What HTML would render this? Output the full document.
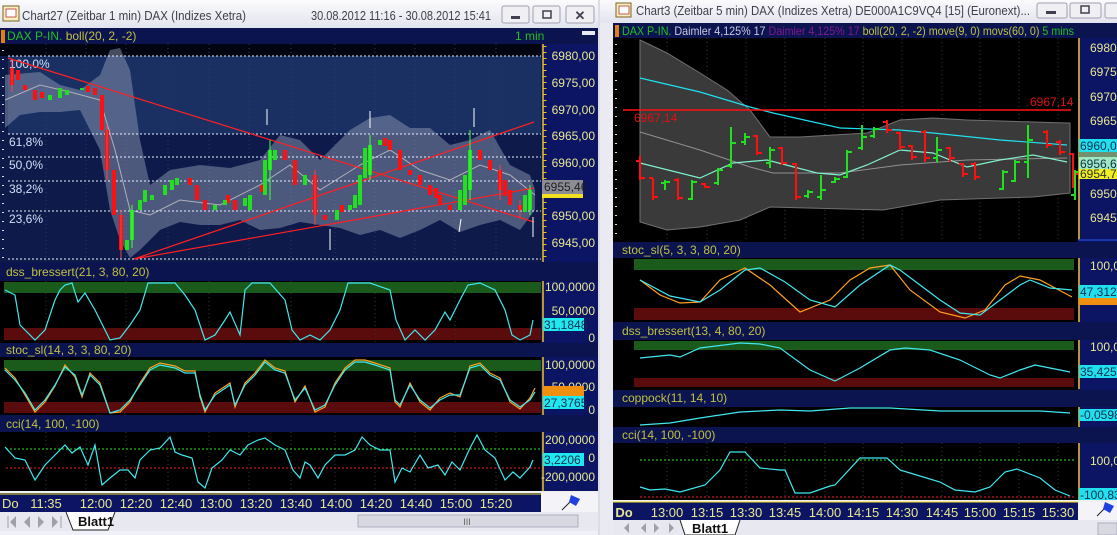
<!DOCTYPE html>
<html><head><meta charset="utf-8"><style>
html,body{margin:0;padding:0;background:#dcdce6;}
svg{display:block;font-family:"Liberation Sans",sans-serif;}
</style></head><body>
<svg width="1117" height="535" viewBox="0 0 1117 535" xmlns="http://www.w3.org/2000/svg">
<defs>
<linearGradient id="tb" x1="0" y1="0" x2="0" y2="1"><stop offset="0" stop-color="#fbfbfd"/><stop offset="1" stop-color="#e2e4ee"/></linearGradient>
</defs>
<rect width="1117" height="535" fill="#dcdce6"/>

<!-- ========== LEFT WINDOW ========== -->
<rect x="0" y="0" width="598" height="28" fill="url(#tb)"/>
<rect x="3" y="6" width="16" height="15" fill="#f4f0c0" stroke="#806020"/><rect x="6" y="9" width="10" height="8" fill="#fff" stroke="#c03030" stroke-width="0.8"/>
<text x="22" y="20" font-size="13" fill="#404048" textLength="224" lengthAdjust="spacingAndGlyphs">Chart27 (Zeitbar 1 min)  DAX (Indizes Xetra)</text>
<text x="311" y="20" font-size="13" fill="#404048" textLength="180" lengthAdjust="spacingAndGlyphs">30.08.2012 11:16 - 30.08.2012 15:41</text>
<g fill="#f0f0f4" stroke="#a0a0b0"><rect x="502" y="6" width="27" height="17" rx="2"/><rect x="533" y="6" width="27" height="17" rx="2"/><rect x="566" y="6" width="28" height="17" rx="2"/></g>
<rect x="511" y="16" width="9" height="3" fill="#404050"/><rect x="543" y="11" width="8" height="7" fill="none" stroke="#404050" stroke-width="1.5"/>
<text x="580" y="20" font-size="13" font-weight="bold" text-anchor="middle" fill="#404050">✕</text>

<!-- header -->
<rect x="0" y="28" width="598" height="16" fill="#0c1450"/>
<rect x="1" y="30" width="4" height="13" fill="#e08010"/>
<text x="7" y="40" font-size="12"><tspan fill="#20c020">DAX P-IN. </tspan><tspan fill="#c0c040">boll(20, 2, -2)</tspan></text>
<text x="515" y="40" font-size="12" fill="#20c020">1 min</text>
<rect x="582" y="31" width="13" height="4" fill="#e8e8f0"/>

<!-- main plot -->
<rect x="0" y="44" width="541" height="218" fill="#0e1a4a"/>
<rect x="0" y="44" width="541" height="12" fill="#020410"/>
<rect x="8" y="56" width="533" height="78" fill="#1a3062"/>
<g stroke="#2a3a6a" stroke-dasharray="1,3"><line x1="46" y1="44" x2="46" y2="262"/><line x1="86" y1="44" x2="86" y2="262"/><line x1="126" y1="44" x2="126" y2="262"/><line x1="168" y1="44" x2="168" y2="262"/><line x1="209" y1="44" x2="209" y2="262"/><line x1="249" y1="44" x2="249" y2="262"/><line x1="291" y1="44" x2="291" y2="262"/><line x1="335" y1="44" x2="335" y2="262"/><line x1="375" y1="44" x2="375" y2="262"/><line x1="415" y1="44" x2="415" y2="262"/><line x1="455" y1="44" x2="455" y2="262"/><line x1="496" y1="44" x2="496" y2="262"/></g>
<polygon fill="#8c96b0" fill-opacity="0.5" points="5,75 40,72 60,85 80,90 100,75 110,50 120,48 130,70 140,140 150,185 170,170 200,165 230,168 260,160 280,135 300,140 320,160 350,130 370,118 390,115 410,128 430,128 450,145 470,140 490,130 510,165 530,175 535,190 535,210 520,230 500,220 480,225 460,232 440,220 420,230 400,238 380,230 360,235 340,228 320,225 300,222 280,228 260,230 240,220 220,225 200,225 180,222 160,230 140,250 130,258 120,240 110,210 100,150 80,110 60,112 40,112 20,115 5,128"/>
<polyline fill="none" stroke="#b0b0b8" stroke-width="1" points="5,100 40,85 70,92 100,100 115,150 130,210 150,215 180,200 220,205 260,185 290,165 320,190 360,165 390,150 420,170 450,180 480,165 510,175 535,195"/>
<g stroke="#e8f0ff" stroke-dasharray="2,2" stroke-width="1"><line x1="8" y1="56" x2="541" y2="56"/><line x1="8" y1="134" x2="541" y2="134"/><line x1="8" y1="157" x2="541" y2="157"/><line x1="8" y1="181" x2="541" y2="181"/><line x1="8" y1="211" x2="541" y2="211"/><line x1="8" y1="259" x2="541" y2="259"/></g>
<g font-size="12" fill="#d0e0f8"><text x="9" y="68">100,0%</text><text x="9" y="146">61,8%</text><text x="9" y="169">50,0%</text><text x="9" y="193">38,2%</text><text x="9" y="223">23,6%</text></g>
<g stroke="#ff2020" stroke-width="1.2"><line x1="8" y1="58" x2="534" y2="222"/><line x1="134" y1="259" x2="534" y2="188"/><line x1="134" y1="259" x2="534" y2="122"/></g>
<g stroke="#ffffff" stroke-width="1"><line x1="267" y1="109" x2="267" y2="125"/><line x1="370" y1="111" x2="370" y2="128"/><line x1="474" y1="108" x2="474" y2="127"/><line x1="330" y1="229" x2="330" y2="250"/><line x1="461" y1="219" x2="459" y2="232"/><line x1="533" y1="217" x2="533" y2="237"/></g>
<path stroke="#ff1010" stroke-width="4" fill="none" d="M12 68V85M25 85V90M35 90V100M95 88V95M102 95V130M107 130V170M114 170V215M121 215V250M190 178V185M197 185V200M205 200V210M235 200V210M285 150V160M295 160V185M315 175V215M325 215V220M390 140V150M400 150V170M410 170V175M420 175V185M430 185V195M440 195V205M450 205V210M480 150V160M490 160V170M500 170V190M510 190V205M520 205V210M18 70V80M42 92V98M88 86V92M228 195V203M262 185V192M342 205V212M385 138V146M436 188V198M505 180V196"/>
<path stroke="#20e020" stroke-width="4" fill="none" d="M50 95V100M67 90V95M82 88V90M127 240V250M132 210V240M140 200V210M152 195V200M165 185V195M177 178V185M215 205V210M225 200V205M250 195V210M265 160V195M275 150V160M305 175V185M337 210V220M350 205V210M360 175V205M370 145V175M380 140V145M460 190V210M470 150V190M530 190V210M60 88V98M145 190V202M172 180V190M245 198V206M270 150V170M355 195V208M365 148V178M465 175V205M525 195V212"/>
<path stroke="#ff4040" stroke-width="1" fill="none" d="M12 60V92M107 125V180M121 210V258M315 170V225M500 165V200M520 200V218"/>
<path stroke="#40ff40" stroke-width="1" fill="none" d="M132 205V248M270 140V200M370 135V180M470 130V200M530 185V215"/>
<line x1="3" y1="50" x2="3" y2="262" stroke="#ddd" stroke-width="2" stroke-dasharray="1,8"/>
<!-- main axis -->
<rect x="541" y="44" width="57" height="218" fill="#0c1464"/>
<line x1="543" y1="44" x2="543" y2="262" stroke="#f0c020" stroke-width="1.5"/>
<line x1="545" y1="46" x2="545" y2="260" stroke="#f0c020" stroke-width="3" stroke-dasharray="1,5"/>
<g font-size="12" fill="#e8e890" text-anchor="end"><text x="595" y="60">6980,00</text><text x="595" y="87">6975,00</text><text x="595" y="114">6970,00</text><text x="595" y="140">6965,00</text><text x="595" y="167">6960,00</text><text x="595" y="220">6950,00</text><text x="595" y="247">6945,00</text></g>
<rect x="542" y="193" width="41" height="5" fill="#f0e020"/>
<rect x="542" y="180" width="41" height="14" fill="#8c8c94"/>
<text x="544" y="191" font-size="12" fill="#202020">6955,46</text>

<!-- dss panel -->
<rect x="0" y="262" width="598" height="19" fill="#0c1450"/>
<text x="6" y="276" font-size="12" fill="#c0c040">dss_bressert(21, 3, 80, 20)</text>
<rect x="0" y="281" width="541" height="62" fill="#000"/>
<rect x="4" y="282" width="537" height="11" fill="#1a5a1a"/>
<rect x="4" y="328" width="537" height="12" fill="#5a0c0c"/>
<g stroke="#333" stroke-dasharray="1,3"><line x1="46" y1="281" x2="46" y2="343"/><line x1="126" y1="281" x2="126" y2="343"/><line x1="209" y1="281" x2="209" y2="343"/><line x1="291" y1="281" x2="291" y2="343"/><line x1="375" y1="281" x2="375" y2="343"/><line x1="455" y1="281" x2="455" y2="343"/></g>
<polyline fill="none" stroke="#40e8f0" stroke-width="1.2" points="5,290 15,295 20,325 35,340 45,330 55,300 60,290 65,285 72,283 78,302 85,293 95,310 105,330 110,340 120,338 130,325 140,310 148,283 160,283 175,283 185,295 195,310 205,340 215,335 225,320 230,312 240,335 245,290 252,283 270,283 285,300 292,330 300,340 310,335 320,340 330,330 340,310 348,283 370,283 390,290 396,320 405,340 415,330 425,340 435,330 445,312 450,320 460,300 468,285 480,283 495,290 505,310 512,335 520,340 530,335 533,320"/>
<rect x="541" y="281" width="57" height="62" fill="#0c1464"/>
<line x1="543" y1="281" x2="543" y2="342" stroke="#f0c020" stroke-width="1.5"/>
<g font-size="12" fill="#e8e890" text-anchor="end"><text x="595" y="291">100,0000</text><text x="595" y="315">50,0000</text><text x="595" y="342">0</text></g>
<rect x="543" y="318" width="41" height="13" fill="#20e8f0"/><text x="544" y="329" font-size="12" fill="#103050">31,1848</text>

<!-- stoc panel -->
<rect x="0" y="343" width="598" height="14" fill="#0c1450"/>
<text x="6" y="354" font-size="12" fill="#c0c040">stoc_sl(14, 3, 3, 80, 20)</text>
<rect x="0" y="357" width="541" height="58" fill="#000"/>
<rect x="4" y="360" width="537" height="11" fill="#1a5a1a"/>
<rect x="4" y="402" width="537" height="11" fill="#5a0c0c"/>
<polyline fill="none" stroke="#ffa020" stroke-width="1.2" points="5,368 15,378 25,395 35,412 45,402 55,386 65,365 75,377 82,397 90,373 100,383 110,413 120,412 130,402 140,383 150,368 160,363 175,366 185,371 195,371 200,397 205,412 215,393 230,383 235,407 245,383 255,373 265,360 275,368 285,371 295,402 305,386 315,412 325,407 335,383 345,368 355,360 365,360 375,363 390,368 395,402 400,407 410,383 420,402 430,410 440,398 450,393 460,397 470,366 480,363 490,373 500,378 510,402 520,409 530,398 535,388"/>
<polyline fill="none" stroke="#40e8f0" stroke-width="1.2" points="5,370 15,380 25,393 35,410 45,400 55,385 65,367 75,375 82,395 90,375 100,385 110,413 120,410 130,400 140,385 150,370 160,365 175,368 185,373 195,373 200,395 205,410 215,395 230,385 235,405 245,385 255,375 265,362 275,370 285,373 295,400 305,388 315,410 325,405 335,385 345,370 355,362 365,362 375,365 390,370 395,400 400,405 410,385 420,400 430,408 440,400 450,395 460,395 470,368 480,365 490,375 500,380 510,400 520,407 530,400 535,392"/>
<rect x="541" y="357" width="57" height="58" fill="#0c1464"/>
<line x1="543" y1="357" x2="543" y2="415" stroke="#f0c020" stroke-width="1.5"/>
<g font-size="12" fill="#e8e890" text-anchor="end"><text x="595" y="369">100,0000</text><text x="595" y="391">50,0000</text><text x="595" y="414">0</text></g>
<rect x="543" y="386" width="41" height="10" fill="#f09010"/>
<rect x="543" y="396" width="41" height="13" fill="#20e8f0"/><text x="544" y="407" font-size="12" fill="#103050">27,3765</text>

<!-- cci panel -->
<rect x="0" y="415" width="598" height="17" fill="#0c1450"/>
<text x="6" y="428" font-size="12" fill="#c0c040">cci(14, 100, -100)</text>
<rect x="0" y="432" width="541" height="60" fill="#000"/>
<g stroke="#333" stroke-dasharray="1,3"><line x1="46" y1="432" x2="46" y2="492"/><line x1="86" y1="432" x2="86" y2="492"/><line x1="126" y1="432" x2="126" y2="492"/><line x1="168" y1="432" x2="168" y2="492"/><line x1="209" y1="432" x2="209" y2="492"/><line x1="249" y1="432" x2="249" y2="492"/><line x1="291" y1="432" x2="291" y2="492"/><line x1="335" y1="432" x2="335" y2="492"/><line x1="375" y1="432" x2="375" y2="492"/><line x1="415" y1="432" x2="415" y2="492"/><line x1="455" y1="432" x2="455" y2="492"/><line x1="496" y1="432" x2="496" y2="492"/></g>
<line x1="6" y1="449" x2="541" y2="449" stroke="#30e030" stroke-dasharray="2,2"/>
<line x1="6" y1="468" x2="541" y2="468" stroke="#ff2020" stroke-dasharray="2,2"/>
<polyline fill="none" stroke="#40e8f0" stroke-width="1.2" points="5,447 15,458 25,460 35,480 45,465 55,455 65,445 72,453 80,447 88,465 95,445 102,485 110,478 120,470 128,470 135,478 140,460 150,450 160,448 170,437 175,452 182,455 192,458 198,482 205,488 212,468 222,460 230,450 240,455 248,445 258,440 265,438 275,445 285,450 293,470 300,478 305,462 310,465 318,478 325,465 335,455 345,455 355,450 362,437 370,445 380,450 390,450 395,482 402,468 410,472 420,455 428,468 438,465 445,475 452,462 460,470 470,448 477,435 485,450 495,458 505,480 513,472 520,478 530,467 533,460"/>
<rect x="541" y="432" width="57" height="60" fill="#0c1464"/>
<line x1="543" y1="432" x2="543" y2="491" stroke="#f0c020" stroke-width="1.5"/>
<g font-size="12" fill="#e8e890" text-anchor="end"><text x="595" y="444">200,0000</text><text x="595" y="462">0</text><text x="595" y="481">-200,0000</text></g>
<rect x="543" y="453" width="41" height="13" fill="#20e8f0"/><text x="544" y="464" font-size="12" fill="#103050">3,2206</text>

<!-- time axis left -->
<rect x="0" y="491" width="598" height="2" fill="#f0f0f0"/>
<rect x="0" y="493" width="541" height="19" fill="#0c1464"/>
<line x1="0" y1="494" x2="541" y2="494" stroke="#f0e020"/>
<rect x="541" y="493" width="57" height="19" fill="#f4f4f8"/>
<path d="M562 510L572 500" stroke="#202020"/><path d="M571 495L580 499L576 506L569 502Z" fill="#2040e0"/>
<g font-size="13" fill="#e8e890"><text x="2" y="508">Do</text><text x="46" y="508" text-anchor="middle">11:35</text><text x="96" y="508" text-anchor="middle">12:00</text><text x="136" y="508" text-anchor="middle">12:20</text><text x="176" y="508" text-anchor="middle">12:40</text><text x="216" y="508" text-anchor="middle">13:00</text><text x="256" y="508" text-anchor="middle">13:20</text><text x="296" y="508" text-anchor="middle">13:40</text><text x="336" y="508" text-anchor="middle">14:00</text><text x="376" y="508" text-anchor="middle">14:20</text><text x="416" y="508" text-anchor="middle">14:40</text><text x="456" y="508" text-anchor="middle">15:00</text><text x="496" y="508" text-anchor="middle">15:20</text></g>
<!-- tabs left -->
<rect x="0" y="512" width="598" height="19" fill="#e8e8f0"/>
<g fill="#a0a0a8"><path d="M10 522L16 516V528Z"/><path d="M24 522L30 516V528Z"/><path d="M38 516V528L44 522Z"/><path d="M52 516V528L58 522Z"/></g>
<g stroke="#a0a0a8"><line x1="8" y1="516" x2="8" y2="528"/><line x1="61" y1="516" x2="61" y2="528"/></g>
<path d="M66 512L73 530H108L115 512" fill="#fff" stroke="#202020"/>
<text x="78" y="526" font-size="13" font-weight="bold" fill="#101010">Blatt1</text>
<rect x="358" y="515" width="220" height="12" fill="#d8d8e0" stroke="#b0b0c0"/>
<text x="467" y="525" font-size="9" fill="#606060" text-anchor="middle">III</text>
<rect x="0" y="531" width="598" height="4" fill="#f0f0f8"/>

<!-- ========== RIGHT WINDOW ========== -->
<rect x="600" y="0" width="517" height="535" fill="#eaeaf2"/>
<rect x="600" y="0" width="517" height="23" fill="url(#tb)"/>
<rect x="616" y="3" width="15" height="14" fill="#f4f0c0" stroke="#806020"/><rect x="619" y="6" width="10" height="8" fill="#fff" stroke="#c03030" stroke-width="0.8"/>
<text x="636" y="15" font-size="13" fill="#404048" textLength="394" lengthAdjust="spacingAndGlyphs">Chart3 (Zeitbar 5 min)  DAX (Indizes Xetra) DE000A1C9VQ4 [15] (Euronext)...</text>
<g fill="#f0f0f4" stroke="#a0a0b0"><rect x="1037" y="3" width="30" height="15" rx="2"/><rect x="1070" y="3" width="31" height="15" rx="2"/><rect x="1105" y="3" width="20" height="15" rx="2"/></g>
<rect x="1046" y="11" width="10" height="3" fill="#404050"/><rect x="1081" y="6" width="8" height="7" fill="none" stroke="#404050" stroke-width="1.5"/>

<rect x="613" y="23" width="504" height="15" fill="#0c1450"/>
<rect x="615" y="25" width="4" height="12" fill="#e08010"/>
<text x="622" y="35" font-size="12" textLength="452" lengthAdjust="spacingAndGlyphs"><tspan fill="#20c020">DAX P-IN. </tspan><tspan fill="#c8c8e0">Daimler  4,125% 17 </tspan><tspan fill="#801890">Daimler  4,125% 17 </tspan><tspan fill="#c0c040">boll(20, 2, -2) move(9, 0) movs(60, 0)</tspan><tspan fill="#20c020">   5 mins</tspan></text>

<rect x="613" y="38" width="465" height="204" fill="#000"/>
<g stroke="#3a3a3a" stroke-dasharray="1,3"><line x1="667" y1="38" x2="667" y2="242"/><line x1="707" y1="38" x2="707" y2="242"/><line x1="746" y1="38" x2="746" y2="242"/><line x1="785" y1="38" x2="785" y2="242"/><line x1="825" y1="38" x2="825" y2="242"/><line x1="863" y1="38" x2="863" y2="242"/><line x1="902" y1="38" x2="902" y2="242"/><line x1="942" y1="38" x2="942" y2="242"/><line x1="980" y1="38" x2="980" y2="242"/><line x1="1019" y1="38" x2="1019" y2="242"/><line x1="1058" y1="38" x2="1058" y2="242"/></g>
<polygon fill="#3a3a3a" stroke="#707070" points="640,40 667,53 700,73 727,90 750,110 770,137 800,137 867,133 900,120 933,118 967,120 1067,123 1070,123 1070,193 1033,197 940,200 883,210 770,207 740,220 700,227 667,230 640,222"/>
<polyline fill="none" stroke="#909090" stroke-width="1" points="640,132 700,150 750,167 773,173 840,173 900,165 967,160 1067,158"/>
<polyline fill="none" stroke="#20e0f0" stroke-width="1.2" points="640,78 700,92 750,107 773,113 840,128 900,130 933,133 1000,140 1067,145"/>
<polyline fill="none" stroke="#80f0d0" stroke-width="1.2" points="640,163 700,178 733,163 767,160 817,173 840,175 867,165 900,150 933,153 967,167 1000,160 1033,155 1067,162"/>
<line x1="623" y1="110" x2="1071" y2="110" stroke="#ff1010" stroke-width="1.5"/>
<text x="634" y="122" font-size="12" fill="#e01010">6967,14</text><text x="1030" y="106" font-size="12" fill="#e01010">6967,14</text>
<path stroke="#ff1010" stroke-width="2" fill="none" d="M640 156V180M636 161H640M640 178H645M653 178V200M649 178H653M653 197H658M678 178V200M674 180H678M678 198H683M705 183V188M701 184H705M705 187H710M757 135V155M753 136H757M757 153H762M782 147V165M778 148H782M782 163H787M796 163V200M792 164H796M796 197H801M887 120V133M883 122H887M887 130H892M900 132V150M896 133H900M900 147H905M912 145V160M908 146H912M912 157H917M925 130V162M921 132H925M925 158H930M950 147V162M946 148H950M950 158H955M963 163V177M959 164H963M963 174H968M975 162V180M971 164H975M975 177H980M1047 130V148M1043 132H1047M1047 145H1052M1060 140V155M1056 142H1060M1060 152H1065M1073 153V188M1069 154H1073M1073 174H1078"/>
<path stroke="#20e020" stroke-width="2" fill="none" d="M665 180V190M661 183H665M665 182H670M692 180V200M688 199H692M692 182H697M718 168V185M714 183H718M718 170H723M731 127V168M727 166H731M731 143H736M745 133V145M741 142H745M745 137H750M770 147V168M766 163H770M770 150H775M808 190V198M804 196H808M808 192H813M821 175V200M817 197H821M821 190H826M835 177V183M831 182H835M835 179H840M847 150V178M843 177H847M847 152H852M862 125V150M858 148H862M862 137H867M874 127V138M870 136H874M874 129H879M937 137V162M933 158H937M937 150H942M1003 170V190M999 189H1003M1003 172H1008M1015 160V182M1011 181H1015M1015 162H1020M1028 125V178M1024 162H1028M1028 140H1033M1075 170V200M1071 195H1075M1075 172H1078"/>
<line x1="616" y1="44" x2="616" y2="240" stroke="#ddd" stroke-width="2" stroke-dasharray="1,8"/>
<rect x="1078" y="38" width="39" height="204" fill="#0c1464"/>
<line x1="1079" y1="38" x2="1079" y2="240" stroke="#f0c020" stroke-width="1.5"/>
<line x1="1078" y1="240" x2="1117" y2="240" stroke="#2040c0" stroke-width="1.5"/>
<g font-size="12" fill="#e8e890"><text x="1090" y="52">6980,00</text><text x="1090" y="76">6975,00</text><text x="1090" y="101">6970,00</text><text x="1090" y="125">6965,00</text><text x="1090" y="198">6950,00</text><text x="1090" y="222">6945,00</text></g>
<rect x="1079" y="139" width="38" height="13" fill="#20e0f0"/><text x="1080" y="150" font-size="12" fill="#103050">6960,05</text>
<rect x="1079" y="152" width="38" height="5" fill="#709070"/>
<rect x="1079" y="157" width="38" height="12" fill="#a0e8c0"/><text x="1080" y="168" font-size="12" fill="#103050">6956,60</text>
<rect x="1079" y="169" width="38" height="10" fill="#f0f020"/><text x="1080" y="178" font-size="12" fill="#303030">6954,73</text>

<!-- right stoc -->
<rect x="613" y="242" width="504" height="16" fill="#0c1450"/>
<text x="622" y="254" font-size="12" fill="#c0c040">stoc_sl(5, 3, 3, 80, 20)</text>
<rect x="613" y="258" width="465" height="64" fill="#000"/>
<rect x="634" y="259" width="440" height="11" fill="#1a5a1a"/>
<rect x="634" y="308" width="440" height="12" fill="#5a0c0c"/>
<polyline fill="none" stroke="#ffa020" stroke-width="1.2" points="640,280 660,295 680,303 700,302 720,280 745,268 770,285 800,312 830,300 850,280 870,268 890,265 910,290 940,312 965,318 985,310 1005,285 1020,276 1040,280 1072,297"/>
<polyline fill="none" stroke="#40e8f0" stroke-width="1.2" points="640,280 670,296 700,302 720,290 745,270 760,268 785,282 810,300 835,307 860,285 890,265 900,270 920,285 940,300 960,313 980,315 1000,300 1020,285 1030,280 1050,288 1072,290"/>
<rect x="1078" y="258" width="39" height="64" fill="#0c1464"/>
<line x1="1079" y1="258" x2="1079" y2="322" stroke="#f0c020" stroke-width="1.5"/>
<text x="1090" y="270" font-size="12" fill="#e8e890">100,0000</text>
<rect x="1079" y="285" width="38" height="13" fill="#20e0f0"/><text x="1080" y="296" font-size="12" fill="#103050">47,3126</text>
<rect x="1079" y="298" width="38" height="7" fill="#f09010"/>

<!-- right dss -->
<rect x="613" y="322" width="504" height="18" fill="#0c1450"/>
<text x="622" y="335" font-size="12" fill="#c0c040">dss_bressert(13, 4, 80, 20)</text>
<rect x="613" y="340" width="465" height="50" fill="#000"/>
<rect x="634" y="341" width="440" height="9" fill="#1a5a1a"/>
<rect x="634" y="378" width="440" height="9" fill="#5a0c0c"/>
<polyline fill="none" stroke="#40e8f0" stroke-width="1.2" points="640,358 670,355 680,357 700,348 740,343 760,344 780,348 810,370 835,381 860,368 890,350 905,348 930,350 960,360 990,375 1000,378 1020,370 1035,365 1050,368 1070,372"/>
<rect x="1078" y="340" width="39" height="50" fill="#0c1464"/>
<line x1="1079" y1="340" x2="1079" y2="389" stroke="#f0c020" stroke-width="1.5"/>
<text x="1090" y="351" font-size="12" fill="#e8e890">100,0000</text>
<rect x="1079" y="365" width="38" height="13" fill="#20e0f0"/><text x="1080" y="376" font-size="12" fill="#103050">35,4253</text>

<!-- coppock -->
<rect x="613" y="390" width="504" height="17" fill="#0c1450"/>
<text x="622" y="402" font-size="12" fill="#c0c040">coppock(11, 14, 10)</text>
<rect x="613" y="407" width="465" height="20" fill="#000"/>
<polyline fill="none" stroke="#40e8f0" stroke-width="1.2" points="640,425 670,423 700,418 740,412 780,410 810,411 850,408 890,408 940,411 990,411 1040,411 1070,413"/>
<rect x="1078" y="407" width="39" height="20" fill="#0c1464"/>
<line x1="1079" y1="407" x2="1079" y2="427" stroke="#f0c020" stroke-width="1.5"/>
<rect x="1079" y="409" width="38" height="12" fill="#20e0f0"/><text x="1080" y="419" font-size="12" fill="#103050">-0,0598</text>

<!-- right cci -->
<rect x="613" y="427" width="504" height="16" fill="#0c1450"/>
<text x="622" y="439" font-size="12" fill="#c0c040">cci(14, 100, -100)</text>
<rect x="613" y="443" width="465" height="57" fill="#000"/>
<g stroke="#3a3a3a" stroke-dasharray="1,3"><line x1="667" y1="443" x2="667" y2="500"/><line x1="707" y1="443" x2="707" y2="500"/><line x1="746" y1="443" x2="746" y2="500"/><line x1="785" y1="443" x2="785" y2="500"/><line x1="825" y1="443" x2="825" y2="500"/><line x1="863" y1="443" x2="863" y2="500"/><line x1="902" y1="443" x2="902" y2="500"/><line x1="942" y1="443" x2="942" y2="500"/><line x1="980" y1="443" x2="980" y2="500"/><line x1="1019" y1="443" x2="1019" y2="500"/><line x1="1058" y1="443" x2="1058" y2="500"/></g>
<line x1="640" y1="460" x2="1074" y2="460" stroke="#30e030" stroke-dasharray="2,2"/>
<line x1="640" y1="497" x2="1074" y2="497" stroke="#ff2020" stroke-dasharray="2,2"/>
<polyline fill="none" stroke="#40e8f0" stroke-width="1.2" points="640,487 650,490 665,489 680,492 705,485 720,470 730,452 745,452 760,468 780,470 785,470 795,493 810,493 830,486 835,485 860,458 887,458 900,470 910,473 940,482 955,490 975,492 990,487 1005,472 1017,469 1040,478 1055,490 1070,496"/>
<rect x="1078" y="443" width="39" height="57" fill="#0c1464"/>
<line x1="1079" y1="443" x2="1079" y2="500" stroke="#f0c020" stroke-width="1.5"/>
<text x="1090" y="465" font-size="12" fill="#e8e890">100,0000</text>
<rect x="1079" y="488" width="38" height="13" fill="#20e0f0"/><text x="1080" y="499" font-size="12" fill="#103050">-100,83</text>

<!-- right time axis -->
<rect x="613" y="500" width="504" height="2" fill="#f0f0f0"/>
<rect x="613" y="502" width="465" height="18" fill="#0c1464"/>
<line x1="613" y1="502" x2="1078" y2="502" stroke="#f0e020"/>
<rect x="1078" y="502" width="39" height="18" fill="#f4f4f8"/>
<path d="M1097 516L1106 507" stroke="#202020"/><path d="M1105 502L1114 506L1110 513L1103 509Z" fill="#2040e0"/>
<g font-size="13" fill="#e8e890" text-anchor="middle"><text x="624" y="517" font-weight="bold">Do</text><text x="667" y="517">13:00</text><text x="707" y="517">13:15</text><text x="746" y="517">13:30</text><text x="785" y="517">13:45</text><text x="825" y="517">14:00</text><text x="863" y="517">14:15</text><text x="902" y="517">14:30</text><text x="942" y="517">14:45</text><text x="980" y="517">15:00</text><text x="1019" y="517">15:15</text><text x="1058" y="517">15:30</text></g>
<rect x="613" y="520" width="504" height="15" fill="#e8e8f0"/>
<g fill="#a0a0a8"><path d="M624 528L629 523V533Z"/><path d="M641 528L646 523V533Z"/><path d="M654 523V533L659 528Z"/><path d="M669 523V533L674 528Z"/></g>
<path d="M680 520L685 535H735L740 520" fill="#fff" stroke="#202020"/>
<text x="692" y="533" font-size="13" font-weight="bold" fill="#101010">Blatt1</text>
<rect x="1098" y="523" width="19" height="12" fill="#d8d8e0" stroke="#b0b0c0"/>
</svg>
</body></html>
